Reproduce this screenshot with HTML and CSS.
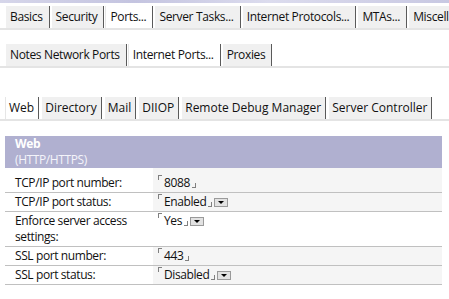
FILE: index.html
```html
<!DOCTYPE html>
<html lang="en">

<head>
    <meta charset="UTF-8">
    <meta name="viewport" content="width=device-width, initial-scale=1.0">
    <title>Server Ports</title>
    <link rel="stylesheet" href="styles.css">
</head>

<body>
    <div class="topband"></div>

    <div class="tabstrip strip1">
        <span class="tab">Basics</span>
        <span class="tab">Security</span>
        <span class="tab active">Ports...</span>
        <span class="tab">Server Tasks...</span>
        <span class="tab">Internet Protocols...</span>
        <span class="tab">MTAs...</span>
        <span class="tab">Miscellaneous...</span>
    </div>

    <div class="tabstrip strip2">
        <span class="tab">Notes Network Ports</span>
        <span class="tab active">Internet Ports...</span>
        <span class="tab">Proxies</span>
    </div>

    <div class="tabstrip strip3">
        <span class="tab active">Web</span>
        <span class="tab">Directory</span>
        <span class="tab">Mail</span>
        <span class="tab">DIIOP</span>
        <span class="tab">Remote Debug Manager</span>
        <span class="tab">Server Controller</span>
    </div>

    <div class="section">
        <div class="sectionTitle">Web</div>
        <div class="sectionSub">(HTTP/HTTPS)</div>
    </div>

    <table class="fields">
        <tr class="first">
            <td class="label">TCP/IP port number:</td>
            <td class="value"><span class="fld">8088</span></td>
        </tr>
        <tr>
            <td class="label">TCP/IP port status:</td>
            <td class="value"><span class="fld">Enabled</span><span class="drop"></span></td>
        </tr>
        <tr class="plain">
            <td class="label">Enforce server access<br>settings:</td>
            <td class="value"><span class="fld">Yes</span><span class="drop"></span></td>
        </tr>
        <tr>
            <td class="label">SSL port number:</td>
            <td class="value"><span class="fld">443</span></td>
        </tr>
        <tr>
            <td class="label">SSL port status:</td>
            <td class="value"><span class="fld">Disabled</span><span class="drop"></span></td>
        </tr>
    </table>
</body>

</html>
```

FILE: styles.css
```css
body {
    margin: 0;
    font-family: 'Open Sans', 'Noto Sans', sans-serif;
    font-size: 12px;
    letter-spacing: -0.4px;
    color: #111111;
    background-color: #ffffff;
    overflow: hidden;
}

.topband {
    height: 3px;
    background: linear-gradient(to right, #d6d6ea, #c4c4e0 30%, #dcdcee 60%, #c8c8e2);
}

/* タブ */
.tabstrip {
    display: flex;
    padding-left: 5px;
    border-bottom: 2px solid #e4e4e4;
    white-space: nowrap;
    overflow: hidden;
}

.strip1 {
    margin-top: 3px;
}

.strip2 {
    margin-top: 14px;
}

.strip3 {
    margin-top: 29px;
}

.tab {
    height: 22px;
    line-height: 22px;
    padding: 0 6px 0 4px;
    margin-right: 1px;
    letter-spacing: -0.35px;
    background-color: #f0f0f0;
    border-left: 1px solid #ffffff;
    border-right: 1px solid #5a5a5a;
}

.strip3 .tab {
    padding: 0 4px 0 3px;
    margin-right: 2px;
    letter-spacing: 0;
}

.tab.active {
    background-color: #ffffff;
    border-left: 1px solid #e6e6e6;
}

/* セクション見出し */
.section {
    margin: 15px 7px 0 5px;
    height: 32px;
    padding-left: 10px;
    background-color: #b0b0d0;
    color: #ffffff;
    line-height: 16px;
    box-sizing: border-box;
}

.sectionTitle {
    font-weight: bold;
    margin-top: -2px;
    display: inline-block;
}

.sectionSub {
    color: #f4f4fa;
}

/* フィールド表 */
.fields {
    margin-left: 5px;
    width: 437px;
    border-collapse: collapse;
}

.fields td {
    padding: 1px 0;
    line-height: 16px;
    border-bottom: 1px solid #c0c0c0;
    vertical-align: top;
}

.fields tr.first td {
    padding-top: 7px;
}

.label {
    width: 138px;
    padding-left: 10px !important;
}

.value {
    background-color: #f5f5f5;
    padding-left: 5px !important;
}

.plain .value {
    background-color: #ffffff;
}

.fld::before {
    content: "";
    display: inline-block;
    width: 3px;
    height: 4px;
    margin-right: 2px;
    vertical-align: 7px;
    border-left: 1px solid #808080;
    border-top: 1px solid #808080;
}

.fld::after {
    content: "";
    display: inline-block;
    width: 3px;
    height: 4px;
    margin-left: 2px;
    vertical-align: -1px;
    border-right: 1px solid #808080;
    border-bottom: 1px solid #808080;
}

.drop {
    display: inline-block;
    position: relative;
    width: 12px;
    height: 7px;
    margin-left: 2px;
    vertical-align: -1px;
    background-color: #e2e2e2;
    border: 1px solid #9a9a9a;
}

.drop::after {
    content: "";
    position: absolute;
    left: 3px;
    top: 2px;
    border-left: 3px solid transparent;
    border-right: 3px solid transparent;
    border-top: 3px solid #000000;
}
```
